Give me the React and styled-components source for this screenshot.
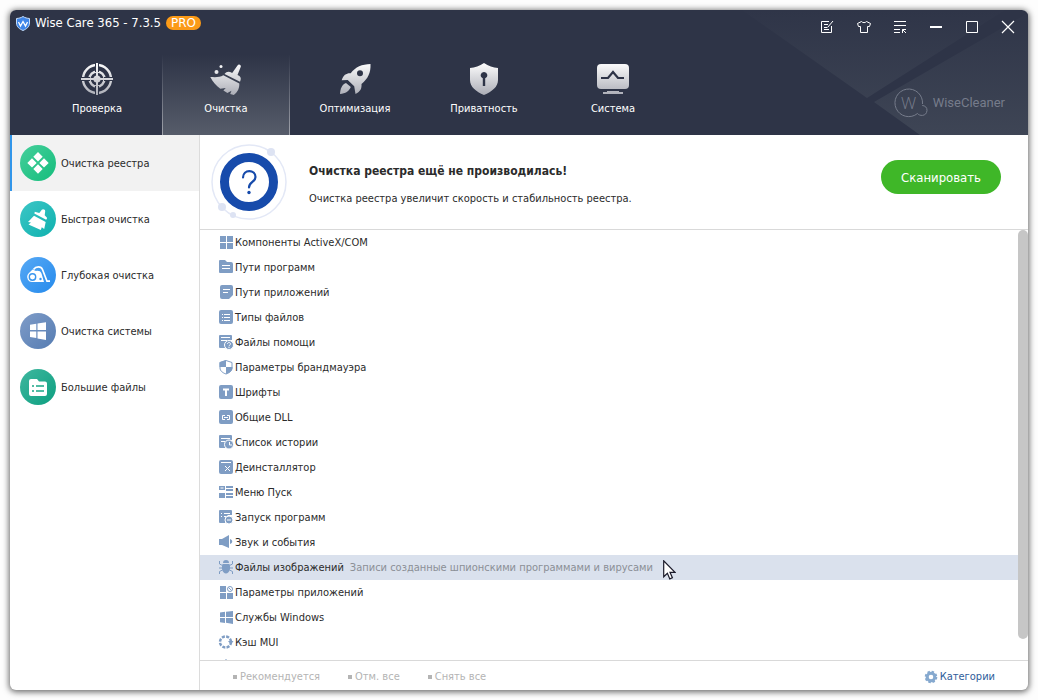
import React from 'react';
import styled, { createGlobalStyle } from 'styled-components';

const GlobalStyle = createGlobalStyle`
  * {
    box-sizing: border-box;
  }

  body {
    margin: 0;
    background: #fdfdfd;
    color: #2b2b2b;
    font-family: 'DejaVu Sans Condensed', 'DejaVu Sans', sans-serif;
    font-size: 11px;
    line-height: 16px;
  }

  button {
    border: 0;
    padding: 0;
    background: none;
    color: inherit;
    font: inherit;
    cursor: pointer;
  }
`;

/* ---------- tab icons ---------- */

const TabSvg = ({ children }) => (
  <svg width="34" height="34" viewBox="0 0 34 34" fill="url(#steel)">
    {children}
  </svg>
);

const TargetIcon = () => (
  <TabSvg>
    <g fill="none" stroke="url(#steel)">
      <circle cx="17" cy="17" r="14" strokeWidth="2.4" />
      <circle cx="17" cy="17" r="7.5" strokeWidth="2.4" />
    </g>
    <g stroke="#2e3447" strokeWidth="4">
      <path d="M17 1v9M17 24v9M1 17h9M24 17h9" />
    </g>
    <circle cx="17" cy="17" r="3.6" />
    <path d="M16 1h2v32h-2zM1 16h32v2H1z" />
  </TabSvg>
);

const BroomIcon = () => (
  <TabSvg>
    <circle cx="7.500" cy="10" r="2" />
    <circle cx="12" cy="4.500" r="1.500" />
    <path d="M28.500 3.500c1-2 4-.7 3.300 1.300L28.500 13c3 1.300 4.300 3 2.500 6.800L15.500 12c2.300-2.800 4.300-2.900 7.700-1z" />
    <path d="M14.300 13.200 30.300 21.500c.3 4-1.300 8.500-5.500 11.500l-3.600-1 1.300-3.200-4.100 2.100-4-2.300 2.300-2.700-5.400.9c-4.300-3.200-7.500-7-10-11.800 5 .2 9.500.5 13-1.800z" />
  </TabSvg>
);

const RocketIcon = () => (
  <TabSvg>
    <path
      fillRule="evenodd"
      d="M32.500 2c.4 9-2.500 14.500-9 20 .3 4.300-.8 7.500-6 10l-1.300-7.700-6.500-6.400-6 .3c1.800-5.500 4.800-7.300 9-7C17.500 5 24 2.200 32.500 2zM22 8.200a3 3 0 1 0 0 6 3 3 0 0 0 0-6z"
    />
    <path d="M8 21c-4.500 2-5.700 6-6 11 5.500-.5 9-2.700 10.800-7z" />
  </TabSvg>
);

const ShieldIcon = () => (
  <TabSvg>
    <path
      fillRule="evenodd"
      d="M17 1c4.500 3 9 4.500 14 5v12c0 7-6 11.500-14 15C9 29.500 3 25 3 18V6c5-.5 9.500-2 14-5zm0 9a3.200 3.200 0 0 0-1.200 6.200V24h2.400v-7.800A3.200 3.200 0 0 0 17 10z"
    />
  </TabSvg>
);

const MonitorIcon = () => (
  <TabSvg>
    <path d="M5 2h24a4 4 0 0 1 4 4v17a4 4 0 0 1-4 4H5a4 4 0 0 1-4-4V6a4 4 0 0 1 4-4z" />
    <path d="M11 29h12v1h4v2H7v-2h4z" />
    <path d="M5 16h7l5-6 5 6h6" fill="none" stroke="#2e3447" strokeWidth="2.200" />
  </TabSvg>
);

/* ---------- sidebar icons ---------- */

const DiamondsGlyph = () => (
  <path d="M18 7l4.700 4.700-4.700 4.700-4.700-4.700zM18 19.300l4.700 4.700-4.700 4.700-4.700-4.700zM12 13.200l4.700 4.700-4.700 4.700-4.700-4.700zM24 13.200l4.700 4.700-4.700 4.700-4.700-4.700z" />
);

const BrushGlyph = () => (
  <g>
    <path d="M14.800 10.700l4.500 1.300 2.500-3.300c1.200-1.200 3.700-.2 3.400 1.600l-.5 4 2.500 2.800-1 1.600-11.900-6.300z" />
    <path d="M14 14.700l11.700 6.200-1.500 7.100-2.400-1.700-1 2.700-12.300-5.500 2.500-2-3-.5z" />
  </g>
);

const VacuumGlyph = () => (
  <g>
    <path d="M12 25a5 5 0 0 1-4.500-7c1.500-2.500 3.500-3.500 5-5.500l3.500 1.500c2.500-.5 4.500 0 5.500 2.500L24 25z" />
    <path d="M13.500 12.500c2.500-3.500 7.500-3.500 9 0l4.500 11.700h3" fill="none" stroke="#fff" strokeWidth="1.700" />
    <circle cx="12.500" cy="20" r="3.200" fill="none" stroke="#3a96ee" strokeWidth="1.400" />
    <circle cx="20.500" cy="22" r="1.200" fill="#3a96ee" />
  </g>
);

const WindowsGlyph = () => (
  <path d="M10 11.800l6.300-1V17H10zM17.500 10.500l8.500-1.300V17h-8.500zM10 18.500h6.300V25l-6.300-1zM17.500 18.500H26V27l-8.500-1.500z" />
);

const FolderGlyph = () => (
  <g>
    <path d="M11 10h6l2 2.500h6a2 2 0 0 1 2 2V25a2 2 0 0 1-2 2H11a2 2 0 0 1-2-2V12a2 2 0 0 1 2-2z" />
    <path d="M12 17h2m2 0h8m-12 5h2m2 0h8" stroke="#19a687" strokeWidth="1.600" />
  </g>
);

/* ---------- list icons, drawn on a 14px grid ---------- */

const Lines = ({ d, width = 1 }) => (
  <path d={d} fill="none" stroke="#fff" strokeWidth={width} />
);

const listIcons = {
  blocks: <path d="M1 1h6v6H1zM8 1h6v6H8zM1 8h6v6H1zM8 8h6v6H8z" />,
  folder: (
    <>
      <path d="M1 0h5l2 2h4a2 2 0 0 1 2 2v8a1 1 0 0 1-1 1H1a1 1 0 0 1-1-1V1a1 1 0 0 1 1-1z" />
      <Lines d="M3 5.500h8M3 8.500h8" />
    </>
  ),
  note: (
    <>
      <path d="M3 0h9a2 2 0 0 1 2 2v8l-4 4H3a2 2 0 0 1-2-2V2a2 2 0 0 1 2-2z" />
      <Lines d="M4 4.500h7M4 7.500h5" />
    </>
  ),
  types: (
    <>
      <rect width="14" height="14" rx="2" />
      <Lines d="M3 4.500h1M5 4.500h6M3 7.500h1M5 7.500h6M3 10.500h1M5 10.500h6" />
    </>
  ),
  help: (
    <>
      <path d="M1 0h11a1 1 0 0 1 1 1v4H9v2H6v6H1a1 1 0 0 1-1-1V1a1 1 0 0 1 1-1z" />
      <Lines d="M2 2.500h9M2 5.500h6" />
      <circle cx="10" cy="10" r="4.500" stroke="#fff" />
      <Lines d="M8.500 9c0-2 3-2 3 0 0 1-1.500 1-1.500 2.300M10 12v1" />
    </>
  ),
  firewall: (
    <>
      <path d="M7 .5l6 2V8c0 3-3 5-6 6-3-1-6-3-6-6V2.500z" fill="#fff" stroke="#7f9dc4" />
      <path d="M7 0v7H.5V2.200zM7 7h6.500c0 4-3 6-6.500 7z" />
    </>
  ),
  fonts: (
    <>
      <rect width="14" height="14" rx="2" />
      <Lines d="M4 4.500h6M7 4v7" width={2} />
    </>
  ),
  dll: (
    <>
      <rect width="14" height="14" rx="2" />
      <Lines d="M6 5.500H3.500v4H6M8 5.500h2.500v4H8M5 7.500h4" />
    </>
  ),
  history: (
    <>
      <path d="M1 0h11a1 1 0 0 1 1 1v4H9L6 8v5H1a1 1 0 0 1-1-1V1a1 1 0 0 1 1-1z" />
      <Lines d="M2 3.500h9M2 6.500h4" />
      <circle cx="10" cy="9.500" r="4.500" stroke="#fff" />
      <Lines d="M10.500 7v3H13" />
    </>
  ),
  uninstall: (
    <>
      <rect width="14" height="14" rx="2" />
      <Lines d="M2 2.500h10M6 6l5 5M11 6l-5 5" />
    </>
  ),
  menu: (
    <>
      <path d="M0 1h6v4H0zM7 1h7v2H7zM7 4h7v2H7zM0 8h6v5H0zM7 8h7v2H7zM7 11h7v2H7z" />
      <Lines d="M1.500 3h3" />
    </>
  ),
  startup: (
    <>
      <path d="M1 0h11a1 1 0 0 1 1 1v4H9L6 8v5H1a1 1 0 0 1-1-1V1a1 1 0 0 1 1-1z" />
      <Lines d="M2 3.500h1M5 3.500h6M2 6.500h1M5 6.500h2" />
      <circle cx="10" cy="10" r="4" stroke="#fff" />
      <Lines d="M8 10h4" />
    </>
  ),
  sound: <path d="M0 4h3l7-4v13L3 10H0zM11 4c3 1 3 4 0 5z" />,
  bug: (
    <>
      <path d="M7 0c2 0 3 1 3 3H4c0-2 1-3 3-3zM3.500 4h7c1.500 5 0 9-3.500 9.500C3.500 13 2 9 3.500 4z" />
      <path
        d="M.5 1v3l3 1.500M13.500 1v3l-3 1.500M0 8h3M14 8h-3M.5 14v-2.500l3-1.500M13.500 14v-2.500l-3-1.500"
        fill="none"
        stroke="#7f9dc4"
      />
    </>
  ),
  params: (
    <>
      <path d="M1 1h6v6H1zM1 8h6v6H1zM8 8h6v6H8z" />
      <path d="M8.500 4a2.500 2.500 0 1 1 5 0 2.500 2.500 0 0 1-5 0zM9.500 2.500l3 3" fill="none" stroke="#7f9dc4" />
    </>
  ),
  windows: <path d="M1 2.500l5-.7V7H1zM7 1.700L14 1v6H7zM1 8h5v5l-5-.7zM7 8h7v6l-7-1.200z" />,
  cache: (
    <>
      <circle cx="6.500" cy="7" r="5.500" fill="none" stroke="#7f9dc4" strokeWidth="2.500" strokeDasharray="3 1.320" />
      <path d="M9 6h5.500l-2.700 3.500z" />
    </>
  ),
  more: <path d="M7-1l6 6v8H1V5z" />,
};

const GearIcon = () => (
  <svg width="14" height="14" viewBox="0 0 14 14">
    <circle cx="7" cy="7" r="5.300" fill="none" stroke="#86a9cf" strokeWidth="2" strokeDasharray="2.400 1.763" />
    <circle cx="7" cy="7" r="3.800" fill="none" stroke="#86a9cf" strokeWidth="3" />
  </svg>
);

/* ---------- data ---------- */

const tabs = [
  { label: 'Проверка', Icon: TargetIcon },
  { label: 'Очистка', Icon: BroomIcon, active: true },
  { label: 'Оптимизация', Icon: RocketIcon },
  { label: 'Приватность', Icon: ShieldIcon },
  { label: 'Система', Icon: MonitorIcon },
];

const sections = [
  { label: 'Очистка реестра', Glyph: DiamondsGlyph, from: '#45cf9b', to: '#15bd7c', active: true },
  { label: 'Быстрая очистка', Glyph: BrushGlyph, from: '#3cc6c6', to: '#0fb1ae' },
  { label: 'Глубокая очистка', Glyph: VacuumGlyph, from: '#57a9f5', to: '#258aec' },
  { label: 'Очистка системы', Glyph: WindowsGlyph, from: '#7f9cc8', to: '#557cb2' },
  { label: 'Большие файлы', Glyph: FolderGlyph, from: '#3fb79f', to: '#0d9f80' },
];

const items = [
  { icon: 'blocks', label: 'Компоненты ActiveX/COM' },
  { icon: 'folder', label: 'Пути программ' },
  { icon: 'note', label: 'Пути приложений' },
  { icon: 'types', label: 'Типы файлов' },
  { icon: 'help', label: 'Файлы помощи' },
  { icon: 'firewall', label: 'Параметры брандмауэра' },
  { icon: 'fonts', label: 'Шрифты' },
  { icon: 'dll', label: 'Общие DLL' },
  { icon: 'history', label: 'Список истории' },
  { icon: 'uninstall', label: 'Деинсталлятор' },
  { icon: 'menu', label: 'Меню Пуск' },
  { icon: 'startup', label: 'Запуск программ' },
  { icon: 'sound', label: 'Звук и события' },
  {
    icon: 'bug',
    label: 'Файлы изображений',
    hint: 'Записи созданные шпионскими программами и вирусами',
  },
  { icon: 'params', label: 'Параметры приложений' },
  { icon: 'windows', label: 'Службы Windows' },
  { icon: 'cache', label: 'Кэш MUI' },
  { icon: 'more', label: '' },
];

const actions = ['Рекомендуется', 'Отм. все', 'Снять все'];

const App = () => {
  return (
    <Desktop>
      <GlobalStyle />
      <Window>
        <Header>
          <Backdrop viewBox="0 0 286 125" aria-hidden="true">
            <defs>
              <linearGradient id="facet" x1="0" y1="0" x2="0" y2="125" gradientUnits="userSpaceOnUse">
                <stop offset="0" stopColor="#2f3548" />
                <stop offset="1" stopColor="#3e4555" />
              </linearGradient>
              <linearGradient id="steel" x1="0" y1="0" x2="0" y2="34" gradientUnits="userSpaceOnUse">
                <stop offset="0.100" stopColor="#f7f7f8" />
                <stop offset="1" stopColor="#a9abb4" />
              </linearGradient>
            </defs>
            <path d="M0 0h263L125 88zM286 3v122H178l-46-33z" fill="url(#facet)" />
          </Backdrop>

          <TitleBar>
            <Title>
              <svg width="14" height="15" viewBox="0 0 14 15">
                <path d="M7 .5c2 1.300 4 1.800 6.500 2V7c0 4-3 6-6.500 7.500C3.500 13 .5 11 .5 7V2.500C3 2.300 5 1.800 7 .5z" fill="#3f86e8" stroke="#c4dcfa" />
                <path d="M2.500 6l2 4L7 5.500 9.500 10l2-4" fill="none" stroke="#fff" strokeWidth="1.300" />
              </svg>
              <h1>Wise Care 365 - 7.3.5</h1>
              <Badge>PRO</Badge>
            </Title>
            <WindowControls>
              <button aria-label="Обратная связь">
                <svg viewBox="0 0 14 14">
                  <path d="M8 1.500H.5v11h10V6M3 4.500h4M3 7.500h3M3 9.500h5M12 1L6.500 7.500" />
                </svg>
              </button>
              <button aria-label="Оформление">
                <svg viewBox="0 0 14 14">
                  <path d="M4.500 1.500L.5 3.500l1 3h2v6h7v-6h2l1-3-4-2c-1 1.500-4 1.500-5 0z" />
                </svg>
              </button>
              <button aria-label="Меню">
                <svg viewBox="0 0 14 14">
                  <path d="M1 1.500h12M1 5.500h12M1 9.500h6M1 12.500h6M13 13L9.500 9.500M9.500 13V9.500H13" />
                </svg>
              </button>
              <button aria-label="Свернуть">
                <svg viewBox="0 0 14 14">
                  <path d="M1 7h12" strokeWidth="2" />
                </svg>
              </button>
              <button aria-label="Развернуть">
                <svg viewBox="0 0 14 14">
                  <path d="M1.500 1.500h11v11h-11z" />
                </svg>
              </button>
              <button aria-label="Закрыть">
                <svg viewBox="0 0 14 14">
                  <path d="M1 1l12 12M13 1L1 13" strokeWidth="1.200" />
                </svg>
              </button>
            </WindowControls>
          </TitleBar>

          <Nav>
            <Tabs>
              {tabs.map(({ label, Icon, active }) => (
                <Tab key={label} $active={active}>
                  <Icon />
                  {label}
                </Tab>
              ))}
            </Tabs>
            <Brand>
              <BrandMark>
                <svg width="36" height="30" viewBox="0 0 36 30" fill="none" stroke="currentColor">
                  <path d="M28.500 16A13.800 13.800 0 1 0 23.500 25.500c1.500 2.500 9 3.500 9.500-3 .2-3-2-5-4.800-5" />
                </svg>
                <span>W</span>
              </BrandMark>
              WiseCleaner
            </Brand>
          </Nav>
        </Header>

        <Body>
          <Sidebar>
            {sections.map(({ label, Glyph, from, to, active }) => (
              <Section key={label} $active={active}>
                <Disc $from={from} $to={to}>
                  <svg width="36" height="36" viewBox="0 0 36 36" fill="#fff">
                    <Glyph />
                  </svg>
                </Disc>
                <SectionLabel>{label}</SectionLabel>
              </Section>
            ))}
          </Sidebar>

          <Main>
            <Status>
              <svg width="78" height="78" viewBox="0 0 78 78" fill="none">
                <circle cx="39" cy="39" r="37" stroke="#e3e8f6" strokeWidth="1.500" />
                <g fill="#dde3f3">
                  <circle cx="61" cy="9" r="4" />
                  <circle cx="12" cy="64" r="4" />
                  <circle cx="23" cy="72" r="3" />
                </g>
                <circle cx="39" cy="39" r="24.500" stroke="#174bab" strokeWidth="9" />
                <path
                  d="M33 34.500c0-8.500 12.500-8.500 12.500-.5 0 5-6.500 5-6.500 10.500"
                  stroke="#174bab"
                  strokeWidth="2.200"
                  strokeLinecap="round"
                />
                <circle cx="39" cy="49.500" r="1.700" fill="#174bab" />
              </svg>
              <StatusText>
                <h2>Очистка реестра ещё не производилась!</h2>
                <p>Очистка реестра увеличит скорость и стабильность реестра.</p>
              </StatusText>
              <ScanButton>Сканировать</ScanButton>
            </Status>

            <ListArea>
              <List>
                {items.map(({ icon, label, hint }) => (
                  <Item key={icon} $hovered={Boolean(hint)}>
                    <ItemIcon viewBox="0 0 14 16">{listIcons[icon]}</ItemIcon>
                    <span>{label}</span>
                    {hint && (
                      <>
                        <Hint>{hint}</Hint>
                        <Pointer viewBox="0 0 13 20">
                          <path d="M.7.8v16l3.700-3.500 2.400 5.600 2.600-1.100-2.400-5.500h5z" />
                        </Pointer>
                      </>
                    )}
                  </Item>
                ))}
              </List>
              <Scrollbar>
                <Thumb />
              </Scrollbar>
            </ListArea>

            <Footer>
              {actions.map(action => (
                <Action key={action}>{action}</Action>
              ))}
              <Categories href="#categories">
                <GearIcon />
                Категории
              </Categories>
            </Footer>
          </Main>
        </Body>
      </Window>
    </Desktop>
  );
};

export default App;

const Desktop = styled.div`
  display: flex;
  height: 100vh;
  padding: 10px;
`;

const Window = styled.div`
  display: flex;
  flex: 1;
  flex-direction: column;
  min-width: 0;
  border-radius: 6px;
  overflow: hidden;
  background: #fff;
  box-shadow: 0 1px 6px 1px rgba(0, 0, 0, 0.6);
`;

const Header = styled.header`
  position: relative;
  flex-shrink: 0;
  background: #2e3447;
  color: #fff;
`;

const Backdrop = styled.svg`
  position: absolute;
  top: 0;
  right: 0;
  height: 100%;
`;

const TitleBar = styled.div`
  position: relative;
  display: flex;
  justify-content: space-between;
  height: 45px;
  padding: 5px 13px 0 6px;
`;

const Title = styled.div`
  display: flex;
  align-items: center;
  gap: 5px;
  height: 16px;

  h1 {
    margin: 0;
    font-size: 13px;
    font-weight: normal;
  }
`;

const Badge = styled.span`
  padding: 0 5px;
  border-radius: 8px;
  background: #fb9a17;
  font-family: 'DejaVu Sans', sans-serif;
  font-size: 12px;
  line-height: 14px;
`;

const WindowControls = styled.div`
  display: flex;
  gap: 22px;
  height: 24px;

  button {
    width: 14px;
  }

  svg {
    display: block;
    width: 14px;
    height: 14px;
    fill: none;
    stroke: #fff;
  }
`;

const Nav = styled.div`
  position: relative;
  display: flex;
  justify-content: space-between;
  padding-left: 23px;
`;

const Tabs = styled.nav`
  display: flex;
  gap: 1px;
`;

const Tab = styled.button`
  display: flex;
  flex-direction: column;
  align-items: center;
  gap: 5px;
  width: 128px;
  height: 80px;
  padding-top: 7px;
  border: solid transparent;
  border-width: 0 1px;
  ${props =>
    props.$active &&
    `
    background: linear-gradient(#2e3447, #565c6a);
    border-image: linear-gradient(#2e3447, #a3a6ae) 1;
  `}
`;

const Brand = styled.div`
  display: flex;
  align-items: center;
  gap: 3px;
  padding: 16px 23px 0 0;
  color: #767c8b;
  font-family: Roboto, sans-serif;
  font-size: 13px;
`;

const BrandMark = styled.span`
  display: grid;

  svg,
  span {
    grid-area: 1 / 1;
  }

  span {
    width: 30px;
    font-family: 'Open Sans', sans-serif;
    font-size: 17px;
    font-weight: 300;
    line-height: 30px;
    text-align: center;
  }
`;

const Body = styled.div`
  display: flex;
  flex: 1;
  min-height: 0;
`;

const Sidebar = styled.nav`
  flex: 0 0 190px;
  border-right: 1px solid #dcdcdc;
`;

const Section = styled.button`
  display: flex;
  align-items: center;
  gap: 5px;
  width: 100%;
  height: 56px;
  padding-left: 8px;
  border-left: 2px solid ${props => (props.$active ? '#3296ea' : 'transparent')};
  background: ${props => (props.$active ? '#f2f2f2' : 'transparent')};
`;

const SectionLabel = styled.span`
  padding-top: 2px;
`;

const Disc = styled.span`
  width: 36px;
  height: 36px;
  border-radius: 50%;
  background: linear-gradient(135deg, ${props => props.$from}, ${props => props.$to});
`;

const Main = styled.main`
  display: flex;
  flex: 1;
  flex-direction: column;
  min-width: 0;
`;

const Status = styled.section`
  display: flex;
  align-items: center;
  flex-shrink: 0;
  height: 95px;
  padding: 0 27px 0 10px;
  border-bottom: 1px solid #d9d9d9;
`;

const StatusText = styled.div`
  flex: 1;
  padding: 5px 0 0 21px;

  h2 {
    margin: 0 0 12px;
    font-size: 12px;
    line-height: 16px;
  }

  p {
    margin: 0;
  }
`;

const ScanButton = styled.button`
  width: 120px;
  height: 34px;
  margin-bottom: 10px;
  padding-top: 2px;
  border-radius: 17px;
  background: #3fb728;
  color: #fff;
  font-size: 13px;
`;

const ListArea = styled.div`
  display: flex;
  flex: 1;
  min-height: 0;
`;

const List = styled.ul`
  flex: 1;
  margin: 0;
  padding: 0;
  overflow: hidden;
  list-style: none;
`;

const Item = styled.li`
  display: flex;
  align-items: center;
  gap: 2px;
  height: 25px;
  padding: 1px 0 0 19px;
  background: ${props => (props.$hovered ? '#dae1ed' : 'transparent')};
`;

const ItemIcon = styled.svg`
  width: 14px;
  height: 16px;
  overflow: visible;
  fill: #7f9dc4;
`;

const Hint = styled.span`
  margin: 0 8px 0 4px;
  color: #8b8f96;
`;

const Pointer = styled.svg`
  align-self: flex-end;
  width: 13px;
  height: 20px;
  fill: #fff;
  stroke: #1a1a2a;
  stroke-width: 1.2;
`;

const Scrollbar = styled.div`
  width: 10px;
`;

const Thumb = styled.div`
  height: 95%;
  border-radius: 5px;
  background: #c6c6c6;
`;

const Footer = styled.footer`
  display: flex;
  align-items: center;
  gap: 28px;
  flex-shrink: 0;
  height: 30px;
  padding: 2px 33px 0;
  border-top: 1px solid #d9d9d9;
`;

const Action = styled.button`
  display: flex;
  align-items: center;
  gap: 3px;
  color: #b4b4b4;

  &::before {
    content: '';
    width: 4px;
    height: 4px;
    background: #b4b4b4;
  }
`;

const Categories = styled.a`
  display: flex;
  align-items: center;
  gap: 2px;
  margin-left: auto;
  color: #2f5d9b;
  text-decoration: none;
`;
